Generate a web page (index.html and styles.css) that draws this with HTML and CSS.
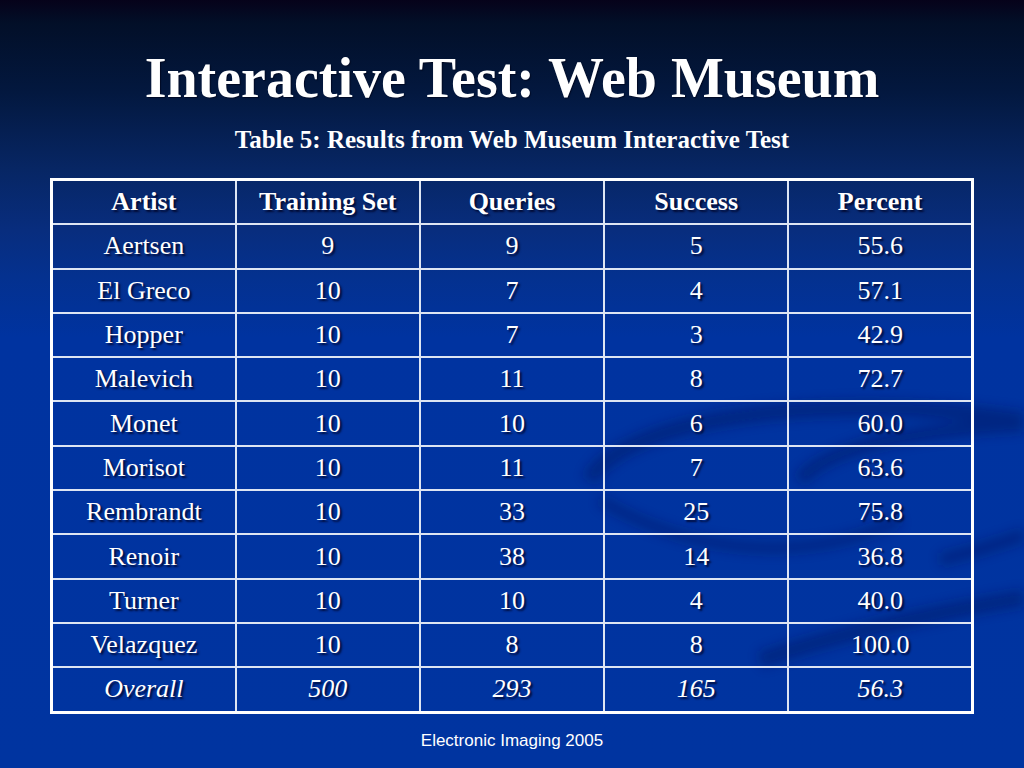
FILE: index.html
```html
<!DOCTYPE html>
<html>
<head>
<meta charset="utf-8">
<title>Interactive Test: Web Museum</title>
<link rel="stylesheet" href="styles.css">
</head>
<body>
<div class="slide">
  <svg class="swoosh" width="1024" height="768" viewBox="0 0 1024 768" aria-hidden="true">
    <defs>
      <filter id="blur" x="-20%" y="-20%" width="140%" height="140%"><feGaussianBlur stdDeviation="6"/></filter>
    </defs>
    <g fill="none" stroke="#00195e" filter="url(#blur)" opacity="0.45">
      <path d="M590 480 C 620 420, 820 390, 1024 420" stroke-width="16"/>
      <path d="M800 480 C 830 445, 920 430, 1024 425" stroke-width="14"/>
      <path d="M600 500 C 700 560, 820 560, 900 520" stroke-width="10"/>
      <path d="M760 660 C 850 630, 950 610, 1024 598" stroke-width="16"/>
      <path d="M940 560 C 980 550, 1010 540, 1024 535" stroke-width="12"/>
    </g>
  </svg>
  <header class="head">
    <h1 class="title">Interactive Test: Web Museum</h1>
    <p class="subtitle">Table 5: Results from Web Museum Interactive Test</p>
  </header>
  <table class="results">
    <thead>
      <tr><th>Artist</th><th>Training Set</th><th>Queries</th><th>Success</th><th>Percent</th></tr>
    </thead>
    <tbody>
      <tr><td>Aertsen</td><td>9</td><td>9</td><td>5</td><td>55.6</td></tr>
      <tr><td>El Greco</td><td>10</td><td>7</td><td>4</td><td>57.1</td></tr>
      <tr><td>Hopper</td><td>10</td><td>7</td><td>3</td><td>42.9</td></tr>
      <tr><td>Malevich</td><td>10</td><td>11</td><td>8</td><td>72.7</td></tr>
      <tr><td>Monet</td><td>10</td><td>10</td><td>6</td><td>60.0</td></tr>
      <tr><td>Morisot</td><td>10</td><td>11</td><td>7</td><td>63.6</td></tr>
      <tr><td>Rembrandt</td><td>10</td><td>33</td><td>25</td><td>75.8</td></tr>
      <tr><td>Renoir</td><td>10</td><td>38</td><td>14</td><td>36.8</td></tr>
      <tr><td>Turner</td><td>10</td><td>10</td><td>4</td><td>40.0</td></tr>
      <tr><td>Velazquez</td><td>10</td><td>8</td><td>8</td><td>100.0</td></tr>
      <tr class="overall"><td>Overall</td><td>500</td><td>293</td><td>165</td><td>56.3</td></tr>
    </tbody>
  </table>
  <footer class="foot">Electronic Imaging 2005</footer>
</div>
</body>
</html>
```

FILE: styles.css
```css
html, body {
  margin: 0;
  padding: 0;
  background: #0033a0;
}

.slide {
  position: relative;
  width: 1024px;
  height: 768px;
  overflow: hidden;
  display: flex;
  flex-direction: column;
  align-items: center;
  color: #ffffff;
  font-family: "Liberation Serif", "Times New Roman", serif;
  background: linear-gradient(to bottom,
    #06021a 0%,
    #020f28 3%,
    #03183f 12%,
    #072664 22%,
    #082d7e 30%,
    #04318f 36%,
    #0033a0 44%,
    #0034a0 100%);
}

.swoosh {
  position: absolute;
  left: 0;
  top: 0;
  pointer-events: none;
}

.head {
  position: relative;
  display: flex;
  flex-direction: column;
  align-items: center;
  padding-top: 46px;
}

.title {
  margin: 0;
  font-size: 56px;
  line-height: 64px;
  font-weight: bold;
  text-shadow: 1px 1px 1px rgba(0, 0, 20, 0.6);
}

.subtitle {
  margin: 15px 0 0;
  font-size: 25px;
  line-height: 30px;
  font-weight: bold;
}

.results {
  position: relative;
  margin-top: 23px;
  width: 924px;
  border-collapse: collapse;
  border: 3px solid #ffffff;
  table-layout: fixed;
  font-size: 26px;
}

.results th,
.results td {
  height: 42.3px;
  padding: 0;
  border: 2px solid #dde5f3;
  text-align: center;
  vertical-align: middle;
  line-height: 30px;
  text-shadow: 2px 2px 2px rgba(0, 5, 40, 0.85);
}

.results th {
  font-weight: bold;
}

.results .overall td {
  font-style: italic;
}

.foot {
  position: relative;
  margin-top: 17px;
  font-family: "Liberation Sans", Arial, sans-serif;
  font-size: 17px;
  line-height: 20px;
}
```
